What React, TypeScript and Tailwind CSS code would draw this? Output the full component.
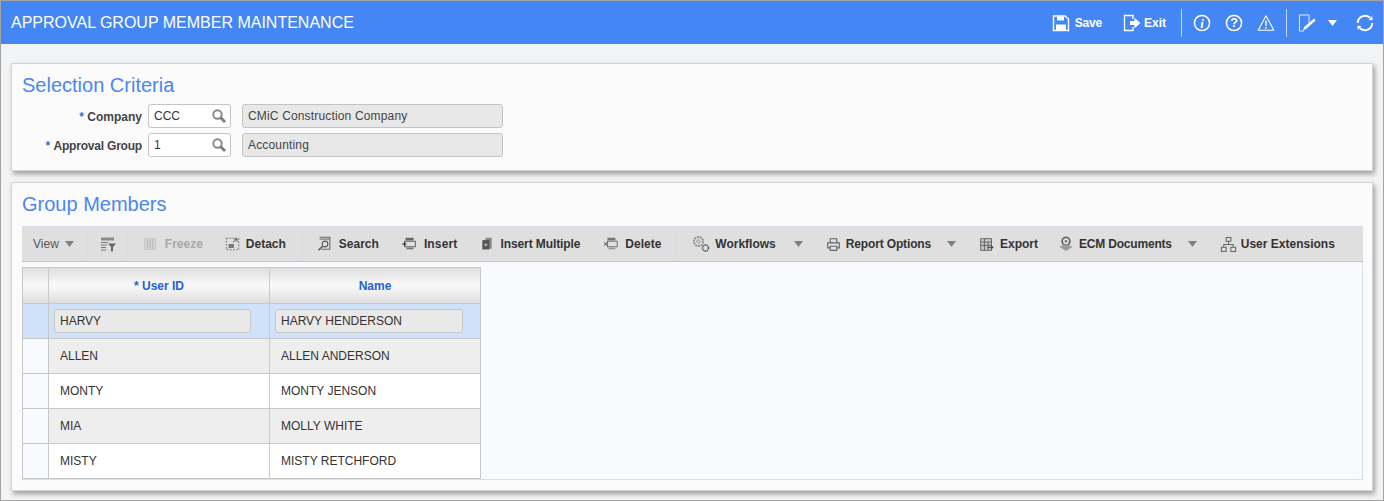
import type { ReactNode } from 'react'

const rows = [
  { id: 'ALLEN', name: 'ALLEN ANDERSON', bg: 'bg-[#eeeeee]' },
  { id: 'MONTY', name: 'MONTY JENSON', bg: 'bg-white' },
  { id: 'MIA', name: 'MOLLY WHITE', bg: 'bg-[#eeeeee]' },
  { id: 'MISTY', name: 'MISTY RETCHFORD', bg: 'bg-white' },
]

function Ico({ children, size = 18, className = '' }: { children: ReactNode; size?: number; className?: string }) {
  return (
    <svg width={size} height={size} viewBox="0 0 18 18" fill="none" className={`shrink-0 ${className}`}>
      {children}
    </svg>
  )
}

function Caret({ className = '' }: { className?: string }) {
  return (
    <svg width="9" height="6" viewBox="0 0 9 6" className={`shrink-0 ${className}`}>
      <path d="M0 0h9L4.5 6z" fill="currentColor" />
    </svg>
  )
}

function Magnifier() {
  return (
    <svg width="14" height="14" viewBox="0 0 14 14" fill="none">
      <circle cx="5.5" cy="5.5" r="4.2" stroke="#8a8a8a" strokeWidth="2" />
      <path d="M8.5 8.5l4.5 4.5" stroke="#7c7c7c" strokeWidth="2.8" />
    </svg>
  )
}

function LookupField({ label, value, desc, labelClass = '' }: { label: string; value: string; desc: string; labelClass?: string }) {
  return (
    <div className="flex items-center h-[24px]">
      <div className="w-[120px] text-right text-[12px] font-bold text-[#444] pt-[1px]">
        <span className="text-[#3b6fd8]">* </span>
        <span className={labelClass}>{label}</span>
      </div>
      <div className="ml-[6px] w-[83px] h-[24px] bg-white border border-[#c4c4c4] rounded-[3px] flex items-center justify-between pl-[5px] pr-[4px] text-[12px] text-[#333]">
        <span>{value}</span>
        <Magnifier />
      </div>
      <div className="ml-[11px] w-[261px] h-[24px] bg-[#e8e8e8] border border-[#c4c4c4] rounded-[3px] flex items-center pl-[5px] text-[12px] text-[#444] tracking-[0.16px]">
        {desc}
      </div>
    </div>
  )
}

function ToolItem({ icon, label, className = '', textClass = '', disabled = false }: { icon: ReactNode; label: string; className?: string; textClass?: string; disabled?: boolean }) {
  return (
    <div className={`flex items-center shrink-0 ${className}`}>
      {icon}
      <span className={`text-[12px] font-bold whitespace-nowrap ${disabled ? 'text-[#a8a8a8]' : 'text-[#333]'} ${textClass}`}>{label}</span>
    </div>
  )
}

function Divider({ className = '' }: { className?: string }) {
  return <div className={`w-px h-[26px] bg-[#d7dce2] shrink-0 ${className}`} />
}

export default function App() {
  return (
    <div className="w-[1384px] h-[501px] overflow-hidden flex flex-col bg-[#f2f3f5] border border-[#a3a3a3] font-['Liberation_Sans',Arial,sans-serif]">
      <header className="h-[43px] shrink-0 bg-[#4487f4] flex items-center text-white">
        <h1 className="ml-[10px] text-[16px] font-normal">APPROVAL GROUP MEMBER MAINTENANCE</h1>
        <div className="ml-auto flex items-center">
          <div className="flex items-center gap-[5px]">
            <Ico>
              <path d="M1.5 2h11.5l3.5 3v11.5H1.5z" stroke="#fff" strokeWidth="1.4" />
              <path d="M5 2.5h7v4H5z" fill="#fff" />
              <path d="M4 10.5h10V16H4z" fill="#fff" />
            </Ico>
            <span className="text-[12px] font-bold tracking-[-0.2px]">Save</span>
          </div>
          <div className="ml-[21px] flex items-center gap-[3px]">
            <Ico>
              <path d="M10 5V1.5H1.5v15H10V13" stroke="#fff" strokeWidth="1.3" />
              <path d="M7 7h4.5V3.8L17.5 9l-6 5.2V11H7z" fill="#fff" />
            </Ico>
            <span className="text-[12px] font-bold">Exit</span>
          </div>
          <div className="ml-[15px] w-px h-[28px] bg-[#c5d9fb]" />
          <div className="ml-[11px] flex items-center gap-[14px]">
            <Ico>
              <circle cx="9" cy="9" r="7.6" stroke="#fff" strokeWidth="1.5" />
              <text x="9" y="13.5" textAnchor="middle" fontSize="12.5" fontWeight="700" fontStyle="italic" fontFamily="Liberation Serif, serif" fill="#fff">i</text>
            </Ico>
            <Ico>
              <circle cx="9" cy="9" r="7.6" stroke="#fff" strokeWidth="1.5" />
              <text x="9" y="13.4" textAnchor="middle" fontSize="12.5" fontWeight="700" fontFamily="Liberation Sans, sans-serif" fill="#fff">?</text>
            </Ico>
            <Ico>
              <path d="M9 1.8l7.8 14.4H1.2z" stroke="#fff" strokeWidth="1.1" strokeLinejoin="round" />
              <path d="M9 6.5v5.5M9 13v1.8" stroke="#fff" strokeWidth="1.4" />
            </Ico>
          </div>
          <div className="ml-[11px] w-px h-[28px] bg-[#c5d9fb]" />
          <Ico className="ml-[11px]">
            <path d="M6 17H1.5V1h9.5v8" stroke="#dfe9fd" strokeWidth="1" />
            <path d="M5 16.5l1.2-3.5 9.8-8.5 1.6 2-9.6 8.6z" fill="#fff" />
          </Ico>
          <Caret className="ml-[12px] text-white" />
          <Ico className="ml-[19px] mr-[9px]">
            <path d="M16.2 9A7.2 7.2 0 0 1 4 14.2" stroke="#fff" strokeWidth="2" />
            <path d="M1.8 9A7.2 7.2 0 0 1 14 3.8" stroke="#fff" strokeWidth="2" />
            <path d="M12.6 6l4 .3-.4-4.2zM5.4 12l-4-.3.4 4.2z" fill="#fff" />
          </Ico>
        </div>
      </header>

      <main className="flex-1 flex flex-col px-[10px] pt-[19px]">
        <section className="h-[108px] bg-[#fbfbfb] border border-[#d4d4d4] shadow-[2px_3px_5px_rgba(0,0,0,0.35)] pl-[10px] pt-[9px]">
          <h2 className="text-[20px] leading-[24px] text-[#4a86f5]">Selection Criteria</h2>
          <div className="mt-[7px] flex flex-col gap-[5px]">
            <LookupField label="Company" value="CCC" desc="CMiC Construction Company" />
            <LookupField label="Approval Group" value="1" desc="Accounting" labelClass="tracking-[-0.2px]" />
          </div>
        </section>

        <section className="mt-[11px] h-[309px] bg-[#fbfbfb] border border-[#d4d4d4] shadow-[2px_3px_5px_rgba(0,0,0,0.35)] px-[10px] pt-[9px]">
          <h2 className="text-[20px] leading-[24px] text-[#4a86f5]">Group Members</h2>

          <div className="mt-[10px] h-[36px] w-[1341px] bg-[#dfdfdf] border-t border-t-[#d9dff0] border-b border-b-[#c4c4c4] flex items-center">
            <span className="ml-[11px] text-[12px] text-[#555]">View</span>
            <Caret className="ml-[6px] text-[#808080]" />
            <Divider className="ml-[13px]" />
            <Ico size={18} className="ml-[11px]">
              <path d="M2 2.5h13v3H2z" fill="#8a8a8a" />
              <path d="M2 7.5h7M2 10h6M2 12.5h5M2 15h5" stroke="#777" strokeWidth="1.2" />
              <path d="M9 8.5h8l-3 3.5v4.5h-2V12z" fill="#666" />
            </Ico>
            <Divider className="ml-[10px]" />
            <ToolItem
              className="ml-[15px] gap-[6px]"
              disabled
              label="Freeze"
              icon={
                <Ico size={16}>
                  <path d="M2 3h12v12H2z" fill="#d6d6d6" stroke="#c2c2c2" />
                  <path d="M5 4v10M8 4v10M11 4v10" stroke="#b0b0b0" />
                </Ico>
              }
            />
            <ToolItem
              className="ml-[22px] gap-[5px]"
              label="Detach"
              icon={
                <Ico size={16}>
                  <path d="M1.5 2.5h14v13h-14z" stroke="#666" strokeDasharray="2 1.5" />
                  <path d="M4 9h6v4.5H4z" fill="#777" />
                  <path d="M9 7l4-3.5M10.5 3.5H13.5V6.5" stroke="#444" />
                </Ico>
              }
            />
            <Divider className="ml-[16px]" />
            <ToolItem
              className="ml-[14px] gap-[6px]"
              label="Search"
              icon={
                <Ico size={16}>
                  <path d="M3 1.5h11.5v13.5H5" stroke="#666" strokeWidth="1.2" />
                  <path d="M3 3.5h11" stroke="#888" strokeWidth="1.6" />
                  <circle cx="9" cy="9" r="3.2" stroke="#555" strokeWidth="1.2" />
                  <path d="M6.5 11.5L1.5 16" stroke="#555" strokeWidth="1.8" />
                </Ico>
              }
            />
            <ToolItem
              className="ml-[23px] gap-[6px]"
              label="Insert"
              textClass="tracking-[0.15px]"
              icon={
                <Ico size={16}>
                  <path d="M4 2h9v3H4z" fill="#666" />
                  <path d="M3 6h12v6H3z" stroke="#666" strokeWidth="1.2" />
                  <path d="M5 13h8v2H5z" fill="#777" />
                  <path d="M0 9h5M3 7v4" stroke="#333" strokeWidth="1.4" />
                </Ico>
              }
            />
            <ToolItem
              className="ml-[23px] gap-[6px]"
              label="Insert Multiple"
              textClass="tracking-[-0.1px]"
              icon={
                <Ico size={14}>
                  <path d="M7 1h8v14H7z" fill="#888" />
                  <path d="M3 4h9v12H3z" fill="#555" />
                  <path d="M5.5 10h4M7.5 8v4" stroke="#ddd" />
                </Ico>
              }
            />
            <ToolItem
              className="ml-[23px] gap-[6px]"
              label="Delete"
              icon={
                <Ico size={16}>
                  <path d="M5 2h9v3H5z" fill="#777" />
                  <path d="M5 6h11v6H5z" stroke="#777" strokeWidth="1.2" />
                  <path d="M6 13h8v2H6z" fill="#999" />
                  <path d="M1 7l4 4M5 7l-4 4" stroke="#444" />
                </Ico>
              }
            />
            <Divider className="ml-[14px]" />
            <ToolItem
              className="ml-[16px] gap-[5px]"
              label="Workflows"
              icon={
                <Ico>
                  <circle cx="6.5" cy="6.5" r="4.6" stroke="#8a8a8a" strokeWidth="1.8" strokeDasharray="2 0.8" />
                  <circle cx="6.5" cy="6.5" r="1.6" stroke="#8a8a8a" />
                  <circle cx="13.5" cy="13" r="3" stroke="#666" strokeWidth="1.8" strokeDasharray="1.5 0.6" />
                </Ico>
              }
            />
            <Caret className="ml-[18px] text-[#808080]" />
            <ToolItem
              className="ml-[23px] gap-[5px]"
              label="Report Options"
              textClass="tracking-[-0.15px]"
              icon={
                <Ico size={15}>
                  <path d="M5 7V2h8v5M5 13H2V7h14v6h-3" stroke="#666" strokeWidth="1.3" />
                  <path d="M5 11h8v5H5z" stroke="#666" strokeWidth="1.3" />
                </Ico>
              }
            />
            <Caret className="ml-[16px] text-[#808080]" />
            <ToolItem
              className="ml-[23px] gap-[6px]"
              label="Export"
              icon={
                <Ico size={15}>
                  <path d="M2 2h13v14H2z" fill="#c8c8c8" stroke="#555" />
                  <path d="M2 6h13M2 10h13M6.5 2v14M11 6v10" stroke="#555" />
                  <path d="M10 12.5h7M14.5 10.5l2.5 2-2.5 2" stroke="#333" />
                </Ico>
              }
            />
            <ToolItem
              className="ml-[20px] gap-[5px]"
              label="ECM Documents"
              textClass="tracking-[-0.2px]"
              icon={
                <Ico size={16}>
                  <circle cx="9" cy="6" r="4.4" stroke="#666" strokeWidth="2" />
                  <circle cx="9" cy="6" r="1.4" fill="#777" />
                  <path d="M1.5 12L9 9l7.5 3L9 17z" fill="#9a9a9a" />
                </Ico>
              }
            />
            <Caret className="ml-[16px] text-[#808080]" />
            <ToolItem
              className="ml-[23px] gap-[4px]"
              label="User Extensions"
              icon={
                <Ico size={17}>
                  <path d="M6.5 1.5h5v4h-5zM1.5 12h5v4.5h-5zM11.5 12h5v4.5h-5z" stroke="#666" strokeWidth="1.1" />
                  <path d="M9 5.5V9M4 12V9h10v3" stroke="#666" strokeWidth="1.1" />
                </Ico>
              }
            />
          </div>

          <div className="w-[1341px] h-[218px] pt-[5px] bg-[#f8fafe] border-r border-b border-[#d6dfec]">
            <table className="w-[458px] table-fixed border-collapse text-[12px] text-[#333]">
              <colgroup>
                <col className="w-[26px]" />
                <col className="w-[221px]" />
                <col className="w-[211px]" />
              </colgroup>
              <thead>
                <tr className="h-[36px] bg-[linear-gradient(#dedede,#f8f8f8_45%,#f4f4f4_60%,#dcdcdc)]">
                  <th className="border border-[#c8c8c8]" />
                  <th className="border border-[#c8c8c8] font-bold text-[#2660d8]">* User ID</th>
                  <th className="border border-[#c8c8c8] font-bold text-[#2660d8]">Name</th>
                </tr>
              </thead>
              <tbody>
                <tr className="h-[35px] bg-[#d0e1fa]">
                  <td className="border border-[#c8c8c8]" />
                  <td className="border border-[#c8c8c8] pl-[5px]">
                    <div className="w-[197px] h-[24px] pl-[5px] flex items-center bg-[#e9e9e9] border border-[#c6c6c6] rounded-[3px]">HARVY</div>
                  </td>
                  <td className="border border-[#c8c8c8] pl-[5px]">
                    <div className="w-[188px] h-[24px] pl-[5px] flex items-center bg-[#e9e9e9] border border-[#c6c6c6] rounded-[3px]">HARVY HENDERSON</div>
                  </td>
                </tr>
                {rows.map(row => (
                  <tr key={row.id} className="h-[35px]">
                    <td className="border border-[#c8c8c8] bg-[#f8fafe]" />
                    <td className={`border border-[#c8c8c8] pl-[11px] ${row.bg}`}>{row.id}</td>
                    <td className={`border border-[#c8c8c8] pl-[11px] ${row.bg}`}>{row.name}</td>
                  </tr>
                ))}
              </tbody>
            </table>
          </div>
        </section>
      </main>
    </div>
  )
}
